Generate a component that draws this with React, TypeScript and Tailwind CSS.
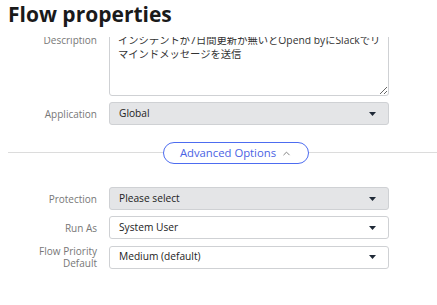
import { ChevronUp } from "lucide-react";

const font = { fontFamily: '"Open Sans", "Noto Sans CJK JP", sans-serif' };

function Caret() {
  return (
    <svg width="7" height="4" viewBox="0 0 7 4" className="shrink-0">
      <path d="M0 0h7L3.5 4z" fill="#1f2937" />
    </svg>
  );
}

function Select({ value, gray }: { value: string; gray?: boolean }) {
  return (
    <div
      className={`flex h-[23px] w-[280px] items-center justify-between rounded-[3px] border border-[#cfd1d4] pl-[9px] pr-[12px] text-[10.2px] text-[#222] ${
        gray ? "bg-[#e4e5e7]" : "bg-white"
      }`}
    >
      <span>{value}</span>
      <Caret />
    </div>
  );
}

function Row({ label, children, className = "" }: { label: React.ReactNode; children: React.ReactNode; className?: string }) {
  return (
    <div className={`flex items-center ${className}`}>
      <div className="w-[98px] pr-[1px] text-right text-[10px] leading-[12px] text-[#777]">{label}</div>
      <div className="ml-[11px]">{children}</div>
    </div>
  );
}

export default function App() {
  return (
    <div className="h-[305px] w-[437px] overflow-hidden bg-white" style={font}>
      {/* Header */}
      <div className="relative z-10 h-[37px] bg-white px-[8px] pt-[1px]">
        <h1 className="text-[21px] font-bold leading-[26px] text-[#1a1a1a]">Flow properties</h1>
      </div>

      {/* Scrolled form */}
      <div className="h-[268px] overflow-hidden">
        <div className="-mt-[8px]">
          <div className="flex items-start">
            <div className="w-[98px] pr-[1px] pt-[4px] text-right text-[10px] text-[#777]">Description</div>
            <textarea
              readOnly
              className="ml-[11px] h-[67px] w-[280px] resize-y rounded-[3px] border border-[#cfd1d4] bg-white pl-[8px] pr-[2px] pt-[3px] text-[10.3px] leading-[14px] text-[#333] outline-none"
              value={"インシデントが7日間更新が無いとOpend byにSlackでリ\nマインドメッセージを送信"}
            />
          </div>

          <Row label="Application" className="mt-[6px]">
            <Select value="Global" gray />
          </Row>

          {/* Advanced options divider */}
          <div className="relative mt-[17px] ml-[8px] flex h-[22px] items-center">
            <div className="absolute inset-x-0 top-[10px] h-px bg-[#dcdcdc]" />
            <button className="relative ml-[155px] flex h-[22px] w-[146px] items-center justify-center gap-[5px] rounded-full border-[1.5px] border-[#4d6cf0] bg-white text-[11.3px] text-[#4a62e4]">
              Advanced Options
              <ChevronUp size={11} strokeWidth={2} className="text-[#777]" />
            </button>
          </div>

          <Row label="Protection" className="mt-[23px]">
            <Select value="Please select" gray />
          </Row>
          <Row label="Run As" className="mt-[6px]">
            <Select value="System User" />
          </Row>
          <Row label={<>Flow Priority<br />Default</>} className="mt-[6px]">
            <Select value="Medium (default)" />
          </Row>
        </div>
      </div>
    </div>
  );
}
